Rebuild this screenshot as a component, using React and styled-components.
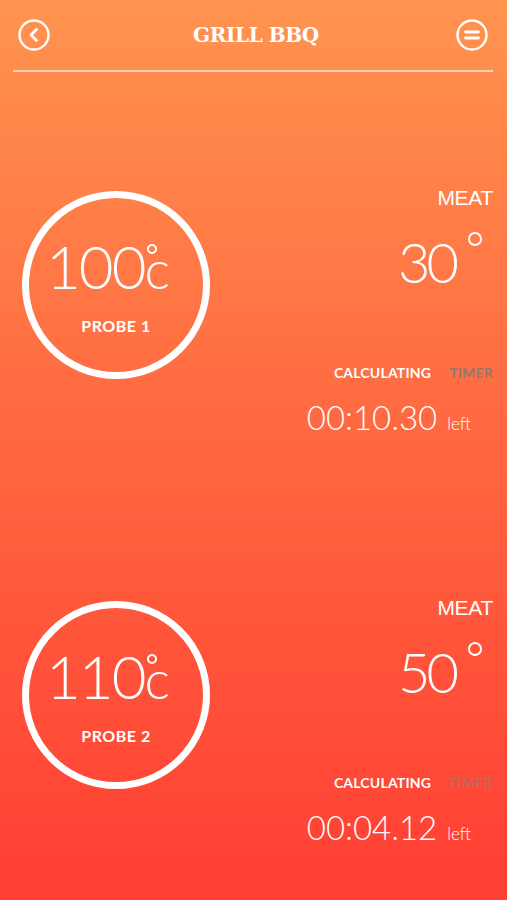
import React from 'react'
import styled, { createGlobalStyle } from 'styled-components'

const GlobalStyle = createGlobalStyle`
  html, body {
    margin: 0;
    padding: 0;
  }
  body {
    font-family: 'Lato', 'Liberation Sans', sans-serif;
    color: #fff;
  }
`

const Screen = styled.div`
  width: 507px;
  height: 900px;
  overflow: hidden;
  background: linear-gradient(180deg, #ff944f 0%, #ff6640 50%, #ff3e33 100%);
  display: flex;
  flex-direction: column;
`

const Header = styled.header`
  height: 72px;
  margin: 0 14px 0 13px;
  border-bottom: 2px solid rgba(255, 255, 255, 0.6);
  display: flex;
  align-items: center;
  justify-content: space-between;
  box-sizing: border-box;
  padding: 0 4px;
`

const Title = styled.h1`
  margin: 0 0 0 6px;
  font-family: 'DejaVu Serif', 'Liberation Serif', serif;
  font-weight: 700;
  font-size: 20px;
  letter-spacing: -0.4px;
  color: #fff;
`

const IconButton = styled.button`
  width: 34px;
  height: 34px;
  padding: 0;
  border: 0;
  background: none;
  display: flex;
  align-items: center;
  justify-content: center;
`

const Probes = styled.main`
  display: flex;
  flex-direction: column;
  gap: 154px;
  padding: 114px 14px 0 22px;
`

const ProbeRow = styled.section`
  display: grid;
  grid-template-columns: 188px 1fr;
  align-items: start;
`

const Dial = styled.div`
  margin-top: 5px;
  width: 188px;
  height: 188px;
  border: 7px solid #fff;
  border-radius: 50%;
  box-sizing: border-box;
  display: flex;
  flex-direction: column;
  align-items: center;
  justify-content: center;
`

const DialTemp = styled.div`
  display: flex;
  align-items: baseline;
  height: 60px;
  font-weight: 300;
  font-size: 60px;
  line-height: 60px;
  letter-spacing: -2px;
  margin-left: -16px;
`

const Unit = styled.span`
  position: relative;
  font-size: 54px;
  line-height: 1;
  letter-spacing: 0;

  &::before {
    content: '';
    position: absolute;
    left: 3px;
    top: 2px;
    width: 6px;
    height: 6px;
    border: 2px solid #fff;
    border-radius: 50%;
  }
`

const ProbeName = styled.div`
  margin-top: 20px;
  font-weight: 700;
  font-size: 16px;
  letter-spacing: 0.5px;
`

const Readout = styled.div`
  display: flex;
  flex-direction: column;
  align-items: flex-end;
`

const Label = styled.div`
  font-family: 'Liberation Sans', sans-serif;
  font-size: 21px;
  line-height: 24px;
  letter-spacing: -0.3px;
`

const MeatTemp = styled.div`
  position: relative;
  margin-top: 24px;
  margin-right: 38px;
  font-weight: 300;
  font-size: 56px;
  line-height: 56px;
  letter-spacing: -4px;

  &::after {
    content: '';
    position: absolute;
    right: -27px;
    top: -2px;
    width: 10px;
    height: 10px;
    border: 2px solid #fff;
    border-radius: 50%;
  }
`

const Status = styled.div`
  margin-top: 75px;
  display: flex;
  gap: 18px;
  font-weight: 700;
  font-size: 14px;
  line-height: 16px;
  letter-spacing: 0.2px;
`

const Tab = styled.span`
  color: ${p => (p.$active ? '#fff' : p.$muted)};
`

const Countdown = styled.div`
  margin-top: 18px;
  margin-right: 22px;
  display: flex;
  align-items: baseline;
  gap: 10px;
  font-weight: 300;
  font-size: 33px;
  line-height: 36px;
`

const Left = styled.span`
  font-size: 17px;
`

function BackIcon() {
  return (
    <svg width="32" height="32" viewBox="0 0 32 32" fill="none" stroke="#fff" strokeWidth="2.4">
      <circle cx="16" cy="16" r="14.5" />
      <path d="M18.5 10.5 L13 16 L18.5 21.5" strokeLinecap="round" strokeLinejoin="round" strokeWidth="2.8" />
    </svg>
  )
}

function MenuIcon() {
  return (
    <svg width="32" height="32" viewBox="0 0 32 32" fill="none" stroke="#fff" strokeWidth="2.4">
      <circle cx="16" cy="16" r="14.5" />
      <path d="M9.5 13 H22.5 M9.5 19 H22.5" strokeLinecap="round" strokeWidth="2.8" />
    </svg>
  )
}

const probes = [
  { id: 1, temp: 100, meat: 30, time: '00:10.30', muted: '#8f7a72' },
  { id: 2, temp: 110, meat: 50, time: '00:04.12', muted: '#c4685a' },
]

function Probe({ probe }) {
  return (
    <ProbeRow>
      <Dial>
        <DialTemp>
          {probe.temp}
          <Unit>c</Unit>
        </DialTemp>
        <ProbeName>PROBE {probe.id}</ProbeName>
      </Dial>
      <Readout>
        <Label>MEAT</Label>
        <MeatTemp>{probe.meat}</MeatTemp>
        <Status>
          <Tab $active>CALCULATING</Tab>
          <Tab $muted={probe.muted}>TIMER</Tab>
        </Status>
        <Countdown>
          {probe.time}
          <Left>left</Left>
        </Countdown>
      </Readout>
    </ProbeRow>
  )
}

export default function App() {
  return (
    <>
      <GlobalStyle />
      <Screen>
        <Header>
          <IconButton aria-label="back">
            <BackIcon />
          </IconButton>
          <Title>GRILL BBQ</Title>
          <IconButton aria-label="menu">
            <MenuIcon />
          </IconButton>
        </Header>
        <Probes>
          {probes.map(p => (
            <Probe key={p.id} probe={p} />
          ))}
        </Probes>
      </Screen>
    </>
  )
}
